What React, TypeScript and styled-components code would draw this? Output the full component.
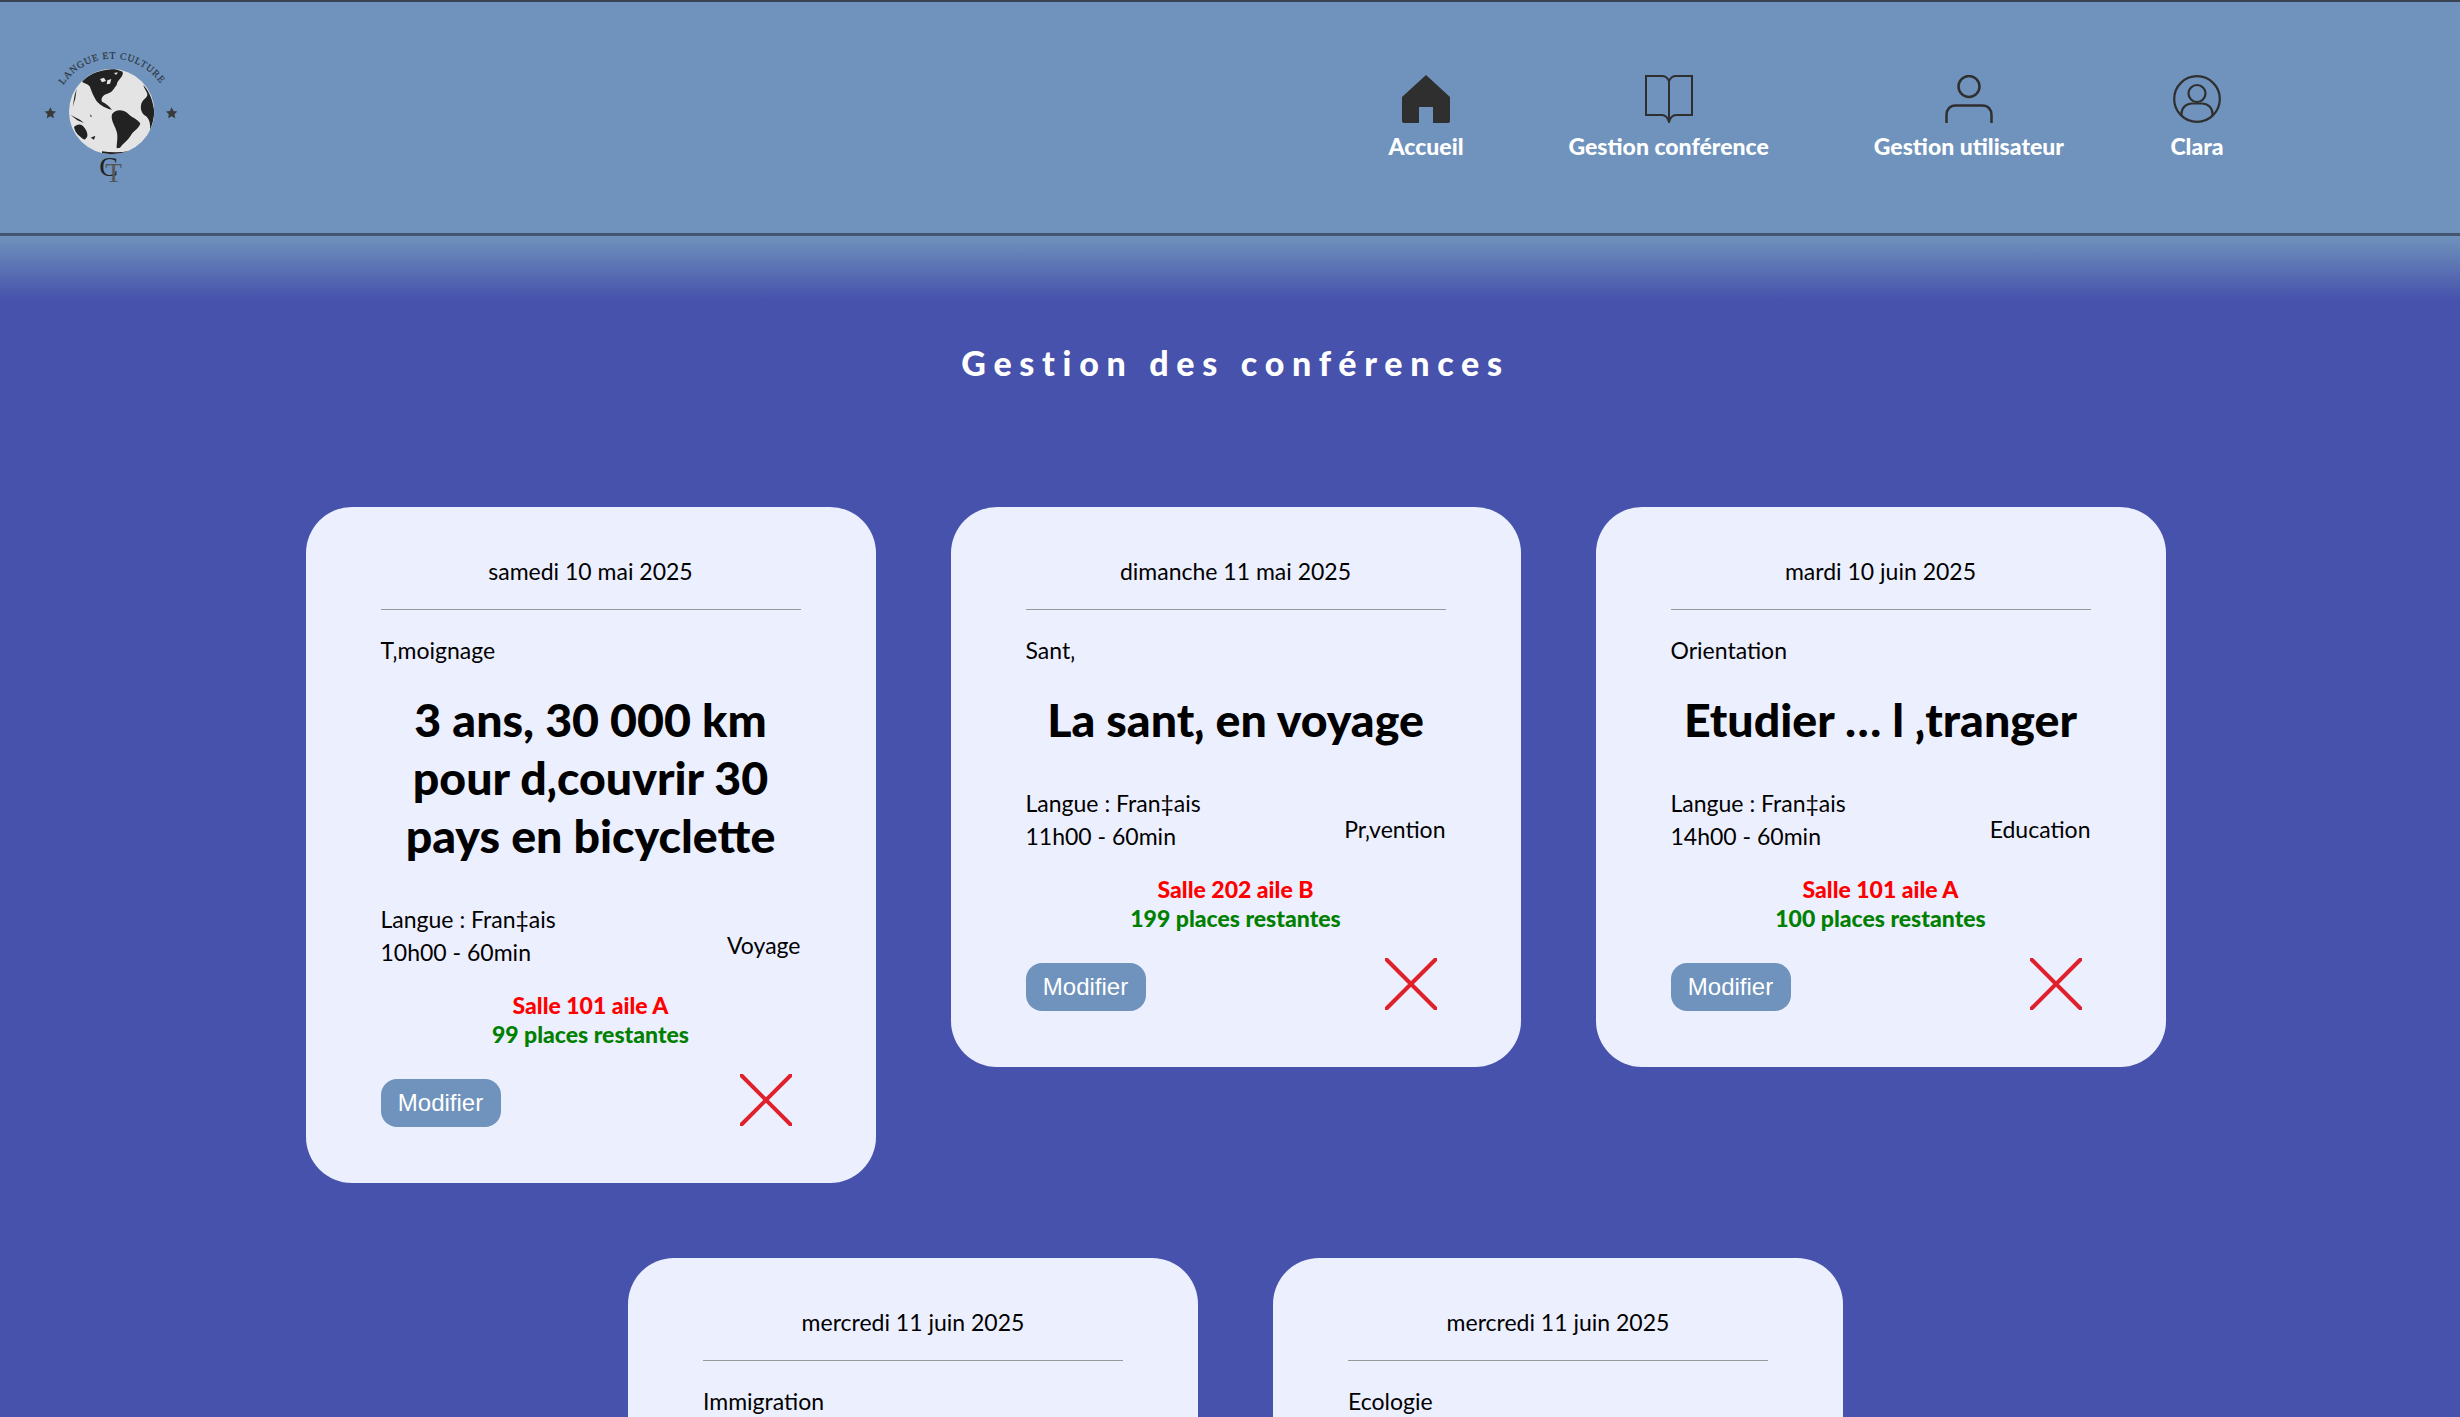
import React from "react";
import styled, {createGlobalStyle} from "styled-components";

const headerBlue = "#6f93bc";
const pageBlue = "#4652ac";
const cardBg = "#eceffe";
const iconDark = "#2f2f2f";

const GlobalStyle = createGlobalStyle`
  html, body {
    margin: 0;
    padding: 0;
    height: 1417px;
    overflow: hidden;
    background: ${pageBlue};
    font-family: "Lato", "Noto Sans", sans-serif;
  }
`;

const Header = styled.header`
  box-sizing: border-box;
  height: 236px;
  display: flex;
  justify-content: space-between;
  background: ${headerBlue};
  border-top: 2px solid #3a4352;
  border-bottom: 3px solid #44566e;
  padding: 41px 235px 0 40px;
`;

const Nav = styled.nav`
  display: flex;
  gap: 105px;
  padding-top: 32px;
`;

const NavItem = styled.a`
  display: flex;
  flex-direction: column;
  align-items: center;
  gap: 10px;
  min-width: 56px;
  color: #fff;
  font-size: 23px;
  font-weight: 900;
  line-height: 26px;
  white-space: nowrap;
`;

const Fade = styled.div`
  height: 64px;
  background: linear-gradient(${headerBlue}, ${pageBlue});
`;

const PageTitle = styled.h1`
  margin: 44px 0 0;
  height: 38px;
  padding-left: 11px;
  text-align: center;
  color: #fff;
  font-size: 34px;
  line-height: 38px;
  font-weight: 900;
  letter-spacing: 7.7px;
`;

const CardGrid = styled.main`
  box-sizing: border-box;
  width: 2460px;
  margin-top: 125px;
  padding-left: 11px;
  display: flex;
  flex-wrap: wrap;
  justify-content: center;
  align-items: flex-start;
  gap: 75px;
`;

const Card = styled.article<{$cut?: boolean}>`
  box-sizing: border-box;
  width: 570px;
  min-height: ${({$cut}) => ($cut ? "400px" : "0")};
  padding: 51px 75px 56px;
  background: ${cardBg};
  border-radius: 46px;
  color: #000;
  font-size: 23px;
`;

const DateLine = styled.div`
  text-align: center;
  line-height: 26px;
  padding-bottom: 25px;
  border-bottom: 1px solid #999;
`;

const Category = styled.div`
  margin-top: 27px;
  line-height: 26px;
`;

const Title = styled.h2`
  margin: 27px 0 0;
  text-align: center;
  font-size: 46.5px;
  font-weight: 900;
  line-height: 58px;
`;

const MetaRow = styled.div`
  margin-top: 38.5px;
  display: flex;
  justify-content: space-between;
  align-items: center;
  line-height: 33px;
`;

const Theme = styled.div`
  padding-top: 20px;
`;

const Room = styled.div`
  margin-top: 22px;
  text-align: center;
  color: #f00;
  font-weight: 900;
  line-height: 29px;
`;

const Seats = styled.div`
  text-align: center;
  color: #008000;
  font-weight: 900;
  line-height: 29px;
`;

const Footer = styled.div`
  margin-top: 25px;
  height: 53px;
  display: flex;
  justify-content: space-between;
`;

const EditButton = styled.button`
  align-self: flex-end;
  box-sizing: border-box;
  width: 120px;
  height: 48px;
  padding: 0;
  border: none;
  border-radius: 16px;
  background: ${headerBlue};
  color: #fff;
  font-family: "Liberation Sans", Arial, sans-serif;
  font-size: 24px;
`;

const DeleteIcon = styled.svg`
  margin-right: 9px;
  width: 52px;
  height: 52px;
`;

const LogoSvg = styled.svg`
  margin-top: 2px;
`;

const HomeIcon = () => (
  <svg width="48" height="48" viewBox="0 0 48 48">
    <path
      d="M24 0 L48 22 V46 a2 2 0 0 1 -2 2 H31 V32 H17 V48 H2 a2 2 0 0 1 -2 -2 V22 Z"
      fill={iconDark}
    />
  </svg>
);

const BookIcon = () => (
  <svg width="48" height="48" viewBox="0 0 48 48" fill="none" stroke={iconDark} strokeWidth="2">
    <path d="M24 6 C22.500 2.500 20 1 17 1 H1 V40 H17 C20 40 22.500 42 24 47 C25.500 42 28 40 31 40 H47 V1 H31 C28 1 25.500 2.500 24 6 Z M24 6 V46" />
  </svg>
);

const UserIcon = () => (
  <svg width="48" height="48" viewBox="0 0 48 48" fill="none" stroke={iconDark} strokeWidth="2.500">
    <circle cx="24" cy="11.500" r="10.500" />
    <path d="M1.500 48 V40 C1.500 34.500 5 30.500 10.500 30.500 H37.500 C43 30.500 46.500 34.500 46.500 40 V48" />
  </svg>
);

const AccountIcon = () => (
  <svg width="48" height="48" viewBox="0 0 48 48" fill="none" stroke={iconDark} strokeWidth="2.200">
    <circle cx="24" cy="24" r="22.800" />
    <circle cx="24" cy="18.500" r="8.500" />
    <path d="M8.500 41 V39 C8.500 32.500 13.500 28.500 19 28.500 H29 C34.500 28.500 39.500 32.500 39.500 39 V41" />
  </svg>
);

const CrossIcon = () => (
  <DeleteIcon viewBox="0 0 52 52" stroke="#e0202a" strokeWidth="4" strokeLinecap="round">
    <path d="M1.500 1.500 L50.500 50.500 M50.500 1.500 L1.500 50.500" />
  </DeleteIcon>
);

const Star = ({x}: {x: number}) => (
  <path
    transform={`translate(${x} 335) scale(18)`}
    d="M0 -1 L0.29 -0.4 L0.95 -0.31 L0.47 0.15 L0.59 0.81 L0 0.5 L-0.59 0.81 L-0.47 0.15 L-0.95 -0.31 L-0.29 -0.4 Z"
    fill="#3a3a3a"
  />
);

// coordinates follow a 3x view of the header corner
const Logo = () => (
  <LogoSvg width="180" height="150" viewBox="0 0 540 450">
    <g transform="translate(-120 -130)">
      <defs>
        <path id="logoArc" d="M190 250 A176 176 0 0 1 484 250" />
        <clipPath id="globeClip">
          <circle cx="335" cy="330" r="128" />
        </clipPath>
      </defs>
      <text fontFamily="Liberation Serif, serif" fontSize="29" fill="#2e3540" stroke="#2e3540" strokeWidth="0.6">
        <textPath href="#logoArc" textLength="342" lengthAdjust="spacing">
          LANGUE ET CULTURE
        </textPath>
      </text>
      <circle cx="335" cy="330" r="128" fill="#e4e4e4" />
      <g clipPath="url(#globeClip)" fill="#222">
        <path d="M246 240 C262 222 290 204 345 202 L368 210 C372 226 352 232 350 250 C340 262 338 272 322 276 C308 280 302 290 306 300 C316 304 326 312 336 324 L326 322 C314 318 296 308 288 296 C280 282 274 268 270 256 C266 246 254 246 246 240 Z" />
        <path d="M336 338 C346 322 368 322 382 334 C394 348 414 352 421 366 C414 384 398 388 392 402 C384 416 368 426 360 438 L350 440 C350 420 356 402 348 384 C342 368 332 354 336 338 Z" />
        <path d="M430 250 C444 264 458 290 463 330 C462 352 456 372 450 386 C452 366 448 350 436 342 C424 334 420 320 424 306 C428 292 444 288 442 276 C438 266 432 260 430 250 Z" />
        <path d="M222 376 C230 368 240 366 248 372 C256 380 264 392 262 404 C258 414 252 416 246 410 C238 402 226 396 222 376 Z" />
        <path d="M212 340 L240 354 L252 364 L232 356 Z" />
        <path d="M218 316 L224 280 L230 262 L226 290 Z" />
        <path d="M306 449 Q350 456 392 447 L392 460 L306 460 Z" />
        <path d="M270 338 L276 344 L272 346 Z" />
        <path d="M272 408 L286 402 L282 414 Z" />
      </g>
      <g fill="#e4e4e4">
        <path d="M300 232 L312 228 L318 238 L306 242 Z" />
        <path d="M322 236 L334 232 L330 246 L320 248 Z" />
        <path d="M342 214 L354 212 L348 220 Z" />
      </g>
      <Star x={151} />
      <Star x={515} />
      <text x="298" y="522" fontFamily="Liberation Serif, serif" fontSize="84" fill="#222">
        C
        <tspan dx="-38" dy="20" fontSize="82" fill="#555">
          T
        </tspan>
      </text>
    </g>
  </LogoSvg>
);

type Conference = {
  date: string;
  category: string;
  title?: string;
  language?: string;
  schedule?: string;
  theme?: string;
  room?: string;
  seats?: string;
};

const conferences: Conference[] = [
  {
    date: "samedi 10 mai 2025",
    category: "T‚moignage",
    title: "3 ans, 30 000 km pour d‚couvrir 30 pays en bicyclette",
    language: "Langue : Fran‡ais",
    schedule: "10h00 - 60min",
    theme: "Voyage",
    room: "Salle 101 aile A",
    seats: "99 places restantes",
  },
  {
    date: "dimanche 11 mai 2025",
    category: "Sant‚",
    title: "La sant‚ en voyage",
    language: "Langue : Fran‡ais",
    schedule: "11h00 - 60min",
    theme: "Pr‚vention",
    room: "Salle 202 aile B",
    seats: "199 places restantes",
  },
  {
    date: "mardi 10 juin 2025",
    category: "Orientation",
    title: "Etudier … l ‚tranger",
    language: "Langue : Fran‡ais",
    schedule: "14h00 - 60min",
    theme: "Education",
    room: "Salle 101 aile A",
    seats: "100 places restantes",
  },
  {date: "mercredi 11 juin 2025", category: "Immigration"},
  {date: "mercredi 11 juin 2025", category: "Ecologie"},
];

const ConferenceCard = ({conference}: {conference: Conference}) => {
  const {date, category, title, language, schedule, theme, room, seats} = conference;
  return (
    <Card $cut={!title}>
      <DateLine>{date}</DateLine>
      <Category>{category}</Category>
      {title && (
        <>
          <Title>{title}</Title>
          <MetaRow>
            <div>
              {language}
              <br />
              {schedule}
            </div>
            <Theme>{theme}</Theme>
          </MetaRow>
          <Room>{room}</Room>
          <Seats>{seats}</Seats>
          <Footer>
            <EditButton>Modifier</EditButton>
            <CrossIcon />
          </Footer>
        </>
      )}
    </Card>
  );
};

export default function App(): JSX.Element {
  return (
    <>
      <GlobalStyle />
      <Header>
        <Logo />
        <Nav>
          <NavItem>
            <HomeIcon />
            Accueil
          </NavItem>
          <NavItem>
            <BookIcon />
            Gestion conférence
          </NavItem>
          <NavItem>
            <UserIcon />
            Gestion utilisateur
          </NavItem>
          <NavItem>
            <AccountIcon />
            Clara
          </NavItem>
        </Nav>
      </Header>
      <Fade />
      <PageTitle>Gestion des conférences</PageTitle>
      <CardGrid>
        {conferences.map((conference) => (
          <ConferenceCard key={conference.category} conference={conference} />
        ))}
      </CardGrid>
    </>
  );
}
